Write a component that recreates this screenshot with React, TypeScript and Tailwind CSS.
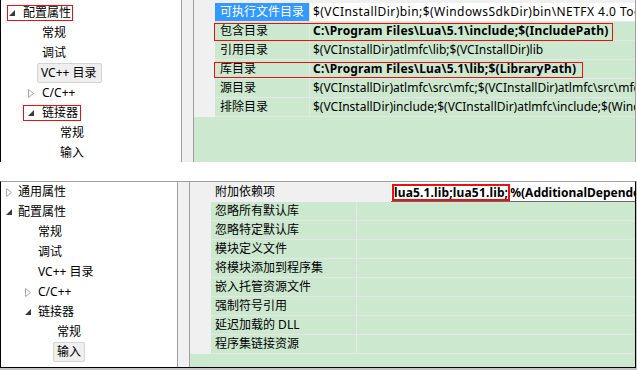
import React from 'react';

const GREEN = 'bg-[#cce8cf]';

const Expanded = () => (
  <svg width="6" height="6" viewBox="0 0 6 6">
    <polygon points="6,0 6,6 0,6" fill="#3a3a3a" />
  </svg>
);

const Collapsed = () => (
  <svg width="6" height="9" viewBox="0 0 6 9">
    <polygon points="0.5,0.5 5.5,4.5 0.5,8.5" fill="#ffffff" stroke="#a8a8a8" />
  </svg>
);

type TreeRowProps = {
  pad: string;
  label: string;
  icon?: 'open' | 'closed';
  iconW?: string;
  boxed?: 'red' | 'sel';
  boxPad?: string;
};

const TreeRow: React.FC<TreeRowProps> = ({ pad, label, icon, iconW = '', boxed, boxPad = '' }) => {
  const inner = (
    <>
      {icon && (
        <span className={`flex items-center shrink-0 ${iconW}`}>{icon === 'open' ? <Expanded /> : <Collapsed />}</span>
      )}
      <span className="leading-none">{label}</span>
    </>
  );
  return (
    <div className={`h-[20px] flex items-center whitespace-nowrap ${pad}`}>
      {boxed === 'red' && (
        <span className={`flex items-center h-[16px] border border-[#e81010] ${boxPad}`}>{inner}</span>
      )}
      {boxed === 'sel' && (
        <span className={`flex items-center h-[20px] border border-[#d4d4d4] rounded-[2px] bg-[#efefef] ${boxPad}`}>
          {inner}
        </span>
      )}
      {!boxed && inner}
    </div>
  );
};

const topRows = [
  { name: '包含目录', value: 'C:\\Program Files\\Lua\\5.1\\include;$(IncludePath)', bold: true, box: 'left-[-1px] top-[1px] w-[399px] h-[18px]' },
  { name: '引用目录', value: '$(VCInstallDir)atlmfc\\lib;$(VCInstallDir)lib' },
  { name: '库目录', value: 'C:\\Program Files\\Lua\\5.1\\lib;$(LibraryPath)', bold: true, box: 'left-[-1px] top-[2px] w-[369px] h-[16px]' },
  { name: '源目录', value: '$(VCInstallDir)atlmfc\\src\\mfc;$(VCInstallDir)atlmfc\\src\\mfcm;$(VCInstallDir)atlmfc\\src\\atl' },
  { name: '排除目录', value: '$(VCInstallDir)include;$(VCInstallDir)atlmfc\\include;$(WindowsSdkDir)include;$(FrameworkSDKDir)\\include' },
];

const bottomRows = [
  '忽略所有默认库',
  '忽略特定默认库',
  '模块定义文件',
  '将模块添加到程序集',
  '嵌入托管资源文件',
  '强制符号引用',
  '延迟加载的 DLL',
  '程序集链接资源',
];

export default function App() {
  return (
    <div className="w-[637px] h-[370px] bg-white overflow-hidden flex flex-col text-[12px] text-black font-['Noto_Sans','Noto_Sans_CJK_SC',sans-serif]">
      {/* upper capture: VC++ directories */}
      <div className="w-[636px] h-[162px] flex border-l border-black shrink-0">
        <div className="w-[181px] shrink-0 border-r border-[#a0a0a0] pt-[3px] bg-white">
          <TreeRow pad="pl-[6px]" boxed="red" boxPad="pl-[1px] pr-[1px]" icon="open" iconW="w-[14px]" label="配置属性" />
          <TreeRow pad="pl-[41px]" label="常规" />
          <TreeRow pad="pl-[41px]" label="调试" />
          <TreeRow pad="pl-[36px]" boxed="sel" boxPad="pl-[3px] pr-[4px]" label="VC++ 目录" />
          <TreeRow pad="pl-[27px]" icon="closed" iconW="w-[14px]" label="C/C++" />
          <TreeRow pad="pl-[22px]" boxed="red" boxPad="pl-[4px] pr-[2px]" icon="open" iconW="w-[14px]" label="链接器" />
          <TreeRow pad="pl-[59px]" label="常规" />
          <TreeRow pad="pl-[59px]" label="输入" />
        </div>
        <div className="w-[12px] shrink-0 bg-[#f0f0f0] border-r border-[#a0a0a0]" />
        <div className={`flex-1 min-w-0 flex flex-col border-r border-[#a0a0a0] ${GREEN}`}>
          <div className="h-[3px] bg-[#f0f0f0]" />
          <div className="flex h-[19px]">
            <div className="w-[21px] shrink-0 bg-[#f0f0f0]" />
            <div className="flex-1 flex border-b border-[#e6e6e6] min-w-0">
              <div className="w-[95px] shrink-0 bg-[#3399ff] text-white pl-[5px] flex items-center border-r border-[#e6e6e6] whitespace-nowrap">可执行文件目录</div>
              <div className="flex-1 min-w-0 bg-white pl-[3px] flex items-center whitespace-nowrap overflow-hidden tracking-[0.45px]">
                $(VCInstallDir)bin;$(WindowsSdkDir)bin\NETFX 4.0 Tools;$(VCInstallDir)bin
              </div>
            </div>
          </div>
          {topRows.map((r) => (
            <div key={r.name} className="flex h-[19px]">
              <div className="w-[21px] shrink-0 bg-[#f0f0f0]" />
              <div className="flex-1 flex border-b border-[#e6e6e6] relative min-w-0">
                <div className="w-[95px] shrink-0 pl-[5px] flex items-center border-r border-[#e6e6e6] whitespace-nowrap">{r.name}</div>
                <div className={`flex-1 min-w-0 pl-[3px] flex items-center whitespace-nowrap overflow-hidden ${r.bold ? 'font-bold tracking-[0.2px]' : ''}`}>
                  {r.value}
                </div>
                {r.box && <div className={`absolute border border-[#e81010] ${r.box}`} />}
              </div>
            </div>
          ))}
          <div className="flex-1" />
        </div>
      </div>

      <div className="h-[19px] shrink-0" />

      {/* lower capture: linker input */}
      <div className="flex-1 bg-[#c4c4c4]">
        <div className="w-[636px] h-[187px] flex bg-white border border-t-[#a0a0a0] border-l-black border-r-black border-b-black">
          <div className="w-[177px] shrink-0 border-r border-[#a0a0a0]">
            <TreeRow pad="pl-[5px]" icon="closed" iconW="w-[12px]" label="通用属性" />
            <TreeRow pad="pl-[5px]" icon="open" iconW="w-[12px]" label="配置属性" />
            <TreeRow pad="pl-[37px]" label="常规" />
            <TreeRow pad="pl-[37px]" label="调试" />
            <TreeRow pad="pl-[37px]" label="VC++ 目录" />
            <TreeRow pad="pl-[24px]" icon="closed" iconW="w-[13px]" label="C/C++" />
            <TreeRow pad="pl-[24px]" icon="open" iconW="w-[13px]" label="链接器" />
            <TreeRow pad="pl-[56px]" label="常规" />
            <TreeRow pad="pl-[52px]" boxed="sel" boxPad="px-[3px]" label="输入" />
          </div>
          <div className="w-[12px] shrink-0 bg-[#f0f0f0] border-r border-[#a0a0a0]" />
          <div className={`flex-1 flex flex-col min-w-0 ${GREEN}`}>
            <div className="flex h-[20px]">
              <div className="w-[201px] shrink-0 bg-[#f0f0f0] pl-[25px] flex items-center">附加依赖项</div>
              <div className="flex-1 min-w-0 bg-white border-b border-[#6a6a6a] flex items-start pt-[2px] pl-[1px] font-bold whitespace-nowrap overflow-hidden">
                <span className="h-[17px] border-2 border-[#e81010] flex items-center tracking-[0.15px]">lua5.1.lib;lua51.lib;</span>
                <span className="h-[17px] flex items-center">%(AdditionalDependencies)</span>
              </div>
            </div>
            {bottomRows.map((name) => (
              <div key={name} className="flex h-[19px]">
                <div className="w-[21px] shrink-0 bg-[#f0f0f0]" />
                <div className="flex-1 flex border-b border-[#e6e6e6]">
                  <div className="w-[146px] shrink-0 pl-[4px] flex items-center border-r border-[#e6e6e6]">{name}</div>
                  <div className="flex-1" />
                </div>
              </div>
            ))}
            <div className="flex-1" />
          </div>
        </div>
      </div>
    </div>
  );
}
